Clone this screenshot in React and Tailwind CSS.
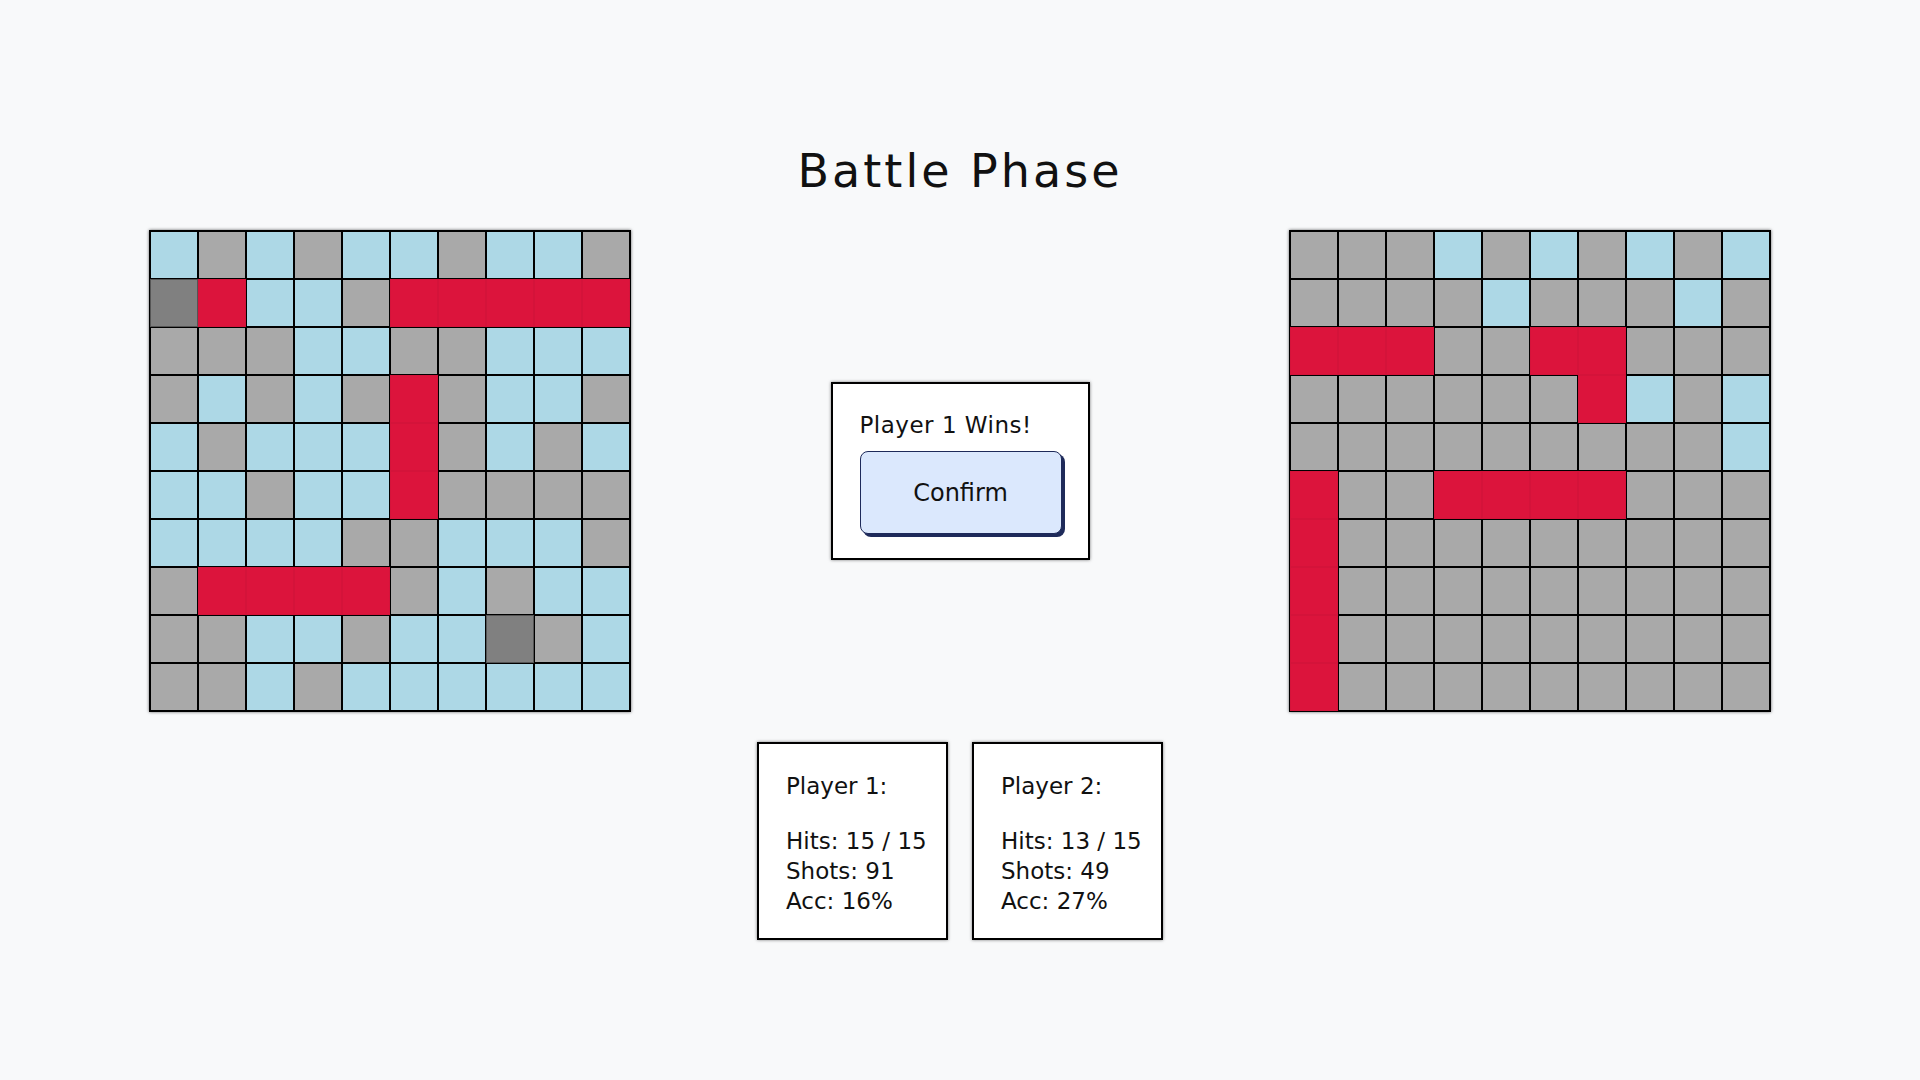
import React from 'react';

// L = water (miss), G = unknown/empty, D = dark (miss on empty), R = hit
const leftBoard = [
  'LGLGLLGLLG',
  'DRLLGRRRRR',
  'GGGLLGGLLL',
  'GLGLGRGLLG',
  'LGLLLRGLGL',
  'LLGLLRGGGG',
  'LLLLGGLLLG',
  'GRRRRGLGLL',
  'GGLLGLLDGL',
  'GGLGLLLLLL',
];

const rightBoard = [
  'GGGLGLGLGL',
  'GGGGLGGGLG',
  'RRRGGRRGGG',
  'GGGGGGRLGL',
  'GGGGGGGGGL',
  'RGGRRRRGGG',
  'RGGGGGGGGG',
  'RGGGGGGGGG',
  'RGGGGGGGGG',
  'RGGGGGGGGG',
];

const cellClass = {
  L: 'bg-[#add8e6] border-black',
  G: 'bg-[#a9a9a9] border-black',
  D: 'bg-[#808080] border-[#555]',
  R: 'bg-[#dc143c] border-[#d4133a]',
};

const Board = ({ rows }) => (
  <div className="border border-black shadow-[0_0_3px_rgba(0,0,0,0.6)] grid grid-cols-10 w-fit">
    {rows.join('').split('').map((c, i) => (
      <div key={i} className={`w-12 h-12 border ${cellClass[c]}`} />
    ))}
  </div>
);

const StatBox = ({ name, hits, shots, acc }) => (
  <div className="w-[191px] h-[198px] bg-white border-2 border-black shadow-[0_0_3px_rgba(0,0,0,0.5)] pl-[27px] pt-[27px] text-[23px] leading-[30px] text-[#111]">
    <p>{name}</p>
    <p className="mt-[25px]">Hits: {hits} / 15</p>
    <p>Shots: {shots}</p>
    <p>Acc: {acc}%</p>
  </div>
);

const App = () => {
  return (
    <main
      className="min-h-screen w-full bg-[#f8f9fa] flex flex-col items-center pt-[141px]"
      style={{ fontFamily: "'DejaVu Sans', sans-serif" }}
    >
      <h1 className="text-[46px] leading-[60px] text-[#111] tracking-[3px]">Battle Phase</h1>

      <section className="w-full flex items-center justify-between px-[149px] mt-[29px]">
        <Board rows={leftBoard} />

        <div className="w-[259px] h-[178px] bg-white border-2 border-black shadow-[0_0_3px_rgba(0,0,0,0.5)] px-[27px] pt-[26px]">
          <p className="text-[23px] leading-[30px] text-[#111] tracking-[0.5px]">Player 1 Wins!</p>
          <button className="mt-[11px] w-[202px] h-[83px] rounded-lg bg-[#dbe8fd] border border-[#1e2a5a] shadow-[3px_3px_0_#1e2a5a] text-[24px] text-[#111]">
            Confirm
          </button>
        </div>

        <Board rows={rightBoard} />
      </section>

      <section className="flex gap-6 mt-[30px]">
        <StatBox name="Player 1:" hits={15} shots={91} acc={16} />
        <StatBox name="Player 2:" hits={13} shots={49} acc={27} />
      </section>
    </main>
  );
};

export default App;
